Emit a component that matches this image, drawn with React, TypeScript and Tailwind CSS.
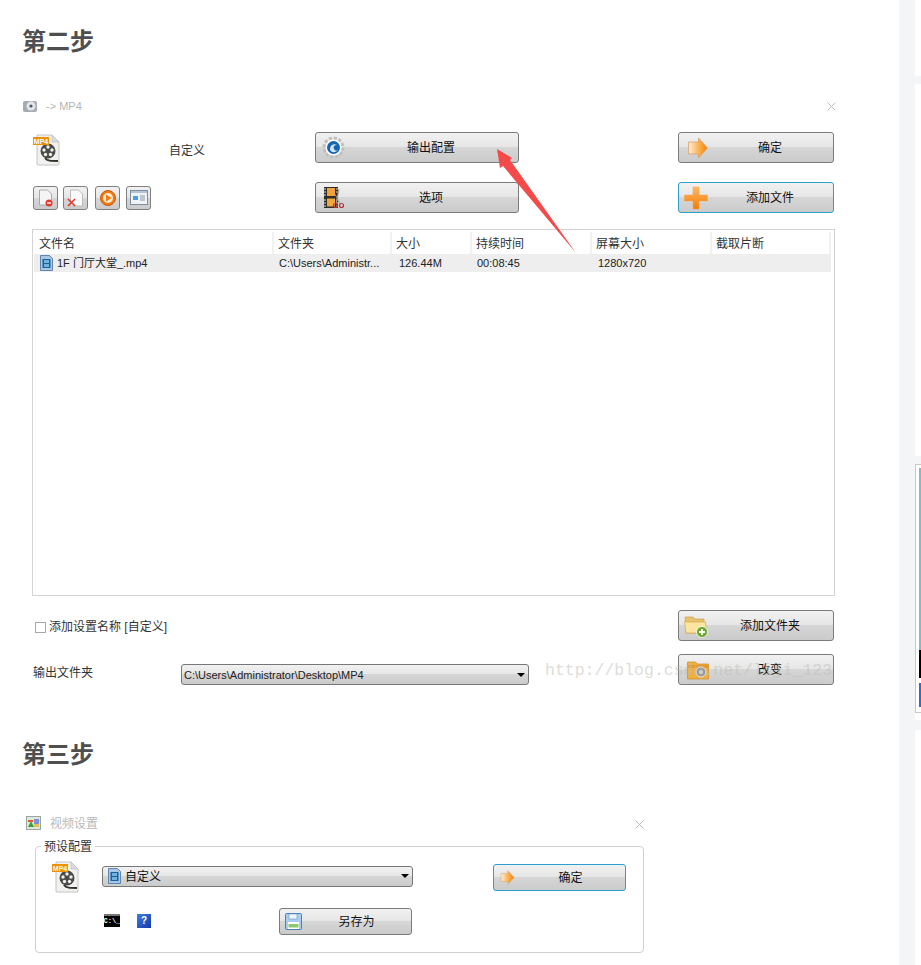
import type { ReactNode } from 'react';

const cjk = 'font-["Liberation_Sans","Noto_Sans_CJK_SC",sans-serif]';
const btnBg = 'bg-[linear-gradient(#f1f1f1_0%,#e6e6e6_49%,#d6d6d6_50%,#cbcbcb_100%)]';

function Mp4Icon() {
    return (
        <svg width="28" height="32" viewBox="0 0 28 32">
            <path d="M4 1h15l7 7v22a1 1 0 0 1-1 1H5a1 1 0 0 1-1-1z" fill="#f1f1ef" stroke="#c4c4c4" />
            <path d="M19 1v7h7z" fill="#dcdcdc" stroke="#bbb" strokeWidth="0.6" />
            <circle cx="15" cy="17" r="7.500" fill="#4a4a46" />
            <circle cx="15" cy="13" r="1.700" fill="#eee" />
            <circle cx="11" cy="16" r="1.700" fill="#eee" />
            <circle cx="19" cy="16" r="1.700" fill="#eee" />
            <circle cx="12.500" cy="20.500" r="1.700" fill="#eee" />
            <circle cx="17.500" cy="20.500" r="1.700" fill="#eee" />
            <path d="M12 24c2 3 6 3 13 3" fill="none" stroke="#33332f" strokeWidth="2" />
            <rect x="0" y="3" width="16" height="8" fill="#ee9100" />
            <text x="8" y="9.600" textAnchor="middle" fontSize="7" fontWeight="700" fill="#fff" fontFamily="Liberation Sans">MP4</text>
        </svg>
    );
}

function GearIcon() {
    return (
        <svg width="23" height="23" viewBox="0 0 23 23">
            <circle cx="11.500" cy="11.500" r="9" fill="none" stroke="#bfbfbf" strokeWidth="4" strokeDasharray="3 1.700" />
            <circle cx="11.500" cy="11.500" r="8" fill="#fff" />
            <circle cx="11.500" cy="11.500" r="6.500" fill="#1464ae" />
            <path d="M8 13c0-4 4-6 7-4-3 0-4 2-3 4s3 2 4 1c-2 3-8 3-8-1z" fill="#cfe6f7" />
        </svg>
    );
}

function FilmCutIcon() {
    return (
        <svg width="22" height="23" viewBox="0 0 22 23">
            <rect x="1" y="1" width="14" height="21" fill="#2c2c28" />
            <rect x="4" y="2" width="8" height="8" fill="#f2a23c" />
            <rect x="4" y="12.500" width="8" height="8" fill="#f4a63e" />
            <path d="M1 3h2M1 6h2M1 9h2M1 14h2M1 17h2M1 20h2M13 3h2M13 6h2M13 14h2M13 17h2M13 20h2" stroke="#ddd" strokeWidth="1" />
            <path d="M16 3l-3 15M12 8l5 10" stroke="#999" strokeWidth="1" />
            <circle cx="12.500" cy="19.500" r="2" fill="none" stroke="#b5303a" strokeWidth="1.200" />
            <circle cx="18.500" cy="19.500" r="2" fill="none" stroke="#b5303a" strokeWidth="1.200" />
        </svg>
    );
}

function ArrowIcon({ id, size }: { id: string; size: number }) {
    return (
        <svg width={size} height={size} viewBox="0 0 21 22">
            <defs>
                <linearGradient id={id} x1="0" x2="1" y1="0" y2="0">
                    <stop offset="0" stopColor="#fdeed8" />
                    <stop offset="0.55" stopColor="#fbb150" />
                    <stop offset="1" stopColor="#fb7d00" />
                </linearGradient>
            </defs>
            <path d="M1 5h10V1l9 10-9 10v-4H1z" fill={`url(#${id})`} stroke="#d9a06a" strokeWidth="0.800" />
        </svg>
    );
}

function PlusIcon() {
    return (
        <svg width="24" height="24" viewBox="0 0 24 24">
            <defs>
                <linearGradient id="plusV" x1="0" x2="0" y1="0" y2="1">
                    <stop offset="0" stopColor="#ffb968" />
                    <stop offset="1" stopColor="#f57c00" />
                </linearGradient>
            </defs>
            <path d="M9 1h6v8h8.500v6H15v8H9v-8H0.500V9H9z" fill="url(#plusV)" stroke="#f2a050" strokeWidth="0.500" strokeLinejoin="round" />
        </svg>
    );
}

function FolderPlusIcon() {
    return (
        <svg width="24" height="24" viewBox="0 0 24 24">
            <path d="M1 3h8l2 2h9v14H2z" fill="#e9c46e" stroke="#c9a24c" strokeWidth="0.700" />
            <path d="M2 19L0.500 8h21l1 11z" fill="#fde4a0" stroke="#d0aa55" strokeWidth="0.700" />
            <circle cx="18" cy="18" r="5.500" fill="#6aa82a" stroke="#fff" strokeWidth="0.800" />
            <path d="M18 15v6M15 18h6" stroke="#fff" strokeWidth="1.800" />
        </svg>
    );
}

function FolderCamIcon() {
    return (
        <svg width="22" height="20" viewBox="0 0 22 20">
            <path d="M0.500 2h8l2 2h11v15h-21z" fill="#efb040" stroke="#c98c28" strokeWidth="0.700" />
            <rect x="0.500" y="5" width="21" height="3" fill="#e89a28" />
            <circle cx="14" cy="12" r="5" fill="#9a9a9a" stroke="#e8e8e8" strokeWidth="1" />
            <circle cx="14" cy="12" r="2" fill="#dcdcdc" />
        </svg>
    );
}

function SaveIcon() {
    return (
        <svg width="17" height="17" viewBox="0 0 17 17">
            <rect x="0.500" y="0.500" width="16" height="16" rx="1" fill="#a9cdf0" stroke="#4a7fb8" />
            <rect x="4" y="1" width="8" height="5" fill="#eef5fb" stroke="#6b97c4" strokeWidth="0.600" />
            <rect x="3" y="9" width="11" height="7" fill="#fff" />
            <rect x="3.500" y="11" width="10" height="3.500" fill="#8dc86a" />
        </svg>
    );
}

function FileFilmIcon() {
    return (
        <svg className="shrink-0" width="13" height="16" viewBox="0 0 13 16">
            <path d="M0.500 0.500h9l3 3v12h-12z" fill="#a9c6e4" stroke="#5d86b0" />
            <rect x="2.500" y="4" width="8" height="9" fill="#1f5f9a" />
            <rect x="4" y="5" width="5" height="3" fill="#6fb4e0" />
            <rect x="4" y="9" width="5" height="3" fill="#6fb4e0" />
        </svg>
    );
}

function CloseX() {
    return (
        <svg width="9" height="9" viewBox="0 0 9 9">
            <path d="M0.500 0.500l8 8M8.500 0.500l-8 8" stroke="#bdbdbd" strokeWidth="1" />
        </svg>
    );
}

function Btn({ icon, iconBox, label, active, className }: { icon: ReactNode; iconBox: string; label: string; active?: boolean; className: string }) {
    return (
        <div className={`flex items-center rounded-[3px] border ${active ? 'border-[#2a9fd0]' : 'border-[#7b7b7b]'} ${btnBg} ${className}`}>
            <div className={`shrink-0 flex items-center [&>svg]:shrink-0 ${iconBox}`}>{icon}</div>
            <span className="flex-1 text-center text-xs text-[#111]">{label}</span>
        </div>
    );
}

function ToolBtn({ children }: { children: ReactNode }) {
    return (
        <div className={`w-[25px] h-[24px] flex items-center justify-center rounded-[3px] border border-[#7f7f7f] ${btnBg}`}>
            {children}
        </div>
    );
}

function Select({ className, children }: { className: string; children: ReactNode }) {
    return (
        <div className={`flex items-center rounded-[3px] border border-[#777] ${btnBg} ${className}`}>
            <div className="flex-1 flex items-center min-w-0">{children}</div>
            <div className="mr-[3px] w-0 h-0 border-x-[4px] border-x-transparent border-t-[4px] border-t-black" />
        </div>
    );
}

function Heading({ children, className }: { children: ReactNode; className: string }) {
    return <h2 className={`ml-[22px] h-[34px] leading-[36px] text-2xl font-bold text-[#4f4f4f] ${className}`}>{children}</h2>;
}

const headers = [
    { label: '文件名', cls: 'w-[240px] pl-[5px]' },
    { label: '文件夹', cls: 'w-[118px] pl-[4px]' },
    { label: '大小', cls: 'w-[80px] pl-[4px]' },
    { label: '持续时间', cls: 'w-[120px] pl-[4px]' },
    { label: '屏幕大小', cls: 'w-[120px] pl-[4px]' },
    { label: '截取片断', cls: 'w-[119px] pl-[4px]' },
];

export default function App() {
    return (
        <div className={`relative flex h-[965px] w-[921px] overflow-hidden bg-white ${cjk}`}>
            <main className="w-[899px] shrink-0 pt-[24px]">
                {/* 第二步 */}
                <Heading className="">第二步</Heading>

                <div className="mt-[40px] ml-[23px] w-[813px] h-[16px] flex items-center text-xs text-[#b5b5b5]">
                    <svg width="14" height="14" viewBox="0 0 14 14">
                        <rect x="0" y="2" width="14" height="11" rx="2" fill="#a4abb2" />
                        <circle cx="8" cy="7" r="4.500" fill="#e4e6e8" />
                        <circle cx="8" cy="7" r="1.600" fill="#4c5a66" />
                    </svg>
                    <span className="ml-[9px] text-[11px]">-&gt; MP4</span>
                    <span className="ml-auto flex"><CloseX /></span>
                </div>

                <div className="ml-[32px] w-[803px]">
                    <div className="mt-[18px] flex h-[31px]">
                        <div className="w-[283px] flex items-start">
                            <div className="ml-[1px] mt-[2px]"><Mp4Icon /></div>
                            <span className="ml-[108px] mt-[11px] text-xs text-[#333]">自定义</span>
                        </div>
                        <Btn className="w-[204px]" iconBox="w-[28px] pl-[6px]" icon={<GearIcon />} label="输出配置" />
                        <Btn className="ml-[159px] w-[156px]" iconBox="w-[28px] pl-[8px]" icon={<ArrowIcon id="a1" size={22} />} label="确定" />
                    </div>

                    <div className="mt-[19px] flex h-[31px]">
                        <div className="w-[283px] flex items-center gap-[5px] pl-[1px]">
                            <ToolBtn>
                                <svg width="17" height="18" viewBox="0 0 17 18">
                                    <path d="M2.500 1h8l4 4v11h-12z" fill="#f5f5f5" stroke="#aaa" />
                                    <circle cx="12" cy="14" r="3.500" fill="#e23b2e" />
                                    <path d="M10 14h4" stroke="#fff" strokeWidth="1.400" />
                                </svg>
                            </ToolBtn>
                            <ToolBtn>
                                <svg width="17" height="18" viewBox="0 0 17 18">
                                    <path d="M3.500 1h8l4 4v12h-12z" fill="#fafafa" stroke="#bbb" />
                                    <path d="M1 10l7 7M8 10l-7 7" stroke="#e0342a" strokeWidth="1.500" />
                                </svg>
                            </ToolBtn>
                            <div className="ml-[2px]">
                                <ToolBtn>
                                    <svg width="18" height="18" viewBox="0 0 18 18">
                                        <circle cx="9" cy="9" r="7.500" fill="#f47a10" stroke="#c8580a" />
                                        <circle cx="9" cy="9" r="5" fill="#fbe9d2" />
                                        <path d="M7 5.500l5.500 3.500-5.500 3.500z" fill="#f47a10" />
                                    </svg>
                                </ToolBtn>
                            </div>
                            <div className="ml-[1px]">
                                <ToolBtn>
                                    <svg width="18" height="15" viewBox="0 0 18 15">
                                        <rect x="0.500" y="0.500" width="17" height="14" fill="#eef3f8" stroke="#7d8ea0" />
                                        <rect x="1" y="1" width="16" height="2" fill="#b4c4d6" />
                                        <rect x="3" y="6" width="5" height="4" fill="#4d9de0" />
                                        <path d="M10 6h5M10 8h5M10 10h5" stroke="#8c99a6" />
                                    </svg>
                                </ToolBtn>
                            </div>
                        </div>
                        <Btn className="w-[204px]" iconBox="w-[28px] pl-[7px]" icon={<FilmCutIcon />} label="选项" />
                        <Btn active className="ml-[159px] w-[156px]" iconBox="w-[28px] pl-[5px]" icon={<PlusIcon />} label="添加文件" />
                    </div>

                    {/* 文件列表 */}
                    <div className="mt-[16px] h-[367px] border border-[#d4d4d4] pt-[2px] pl-[1px] pr-[3px]">
                        <div className="flex h-[22px] text-xs text-[#333]">
                            {headers.map((h) => (
                                <div key={h.label} className={`${h.cls} flex items-center pt-[1px] border-r-2 border-[#f1f1f1]`}>{h.label}</div>
                            ))}
                        </div>
                        <div className="flex h-[18px] items-center bg-[#eeeeee] text-[11px] text-[#222]">
                            <div className="w-[240px] pl-[6px] flex items-center gap-[4px]"><FileFilmIcon /><span>1F 门厅大堂_.mp4</span></div>
                            <div className="w-[118px] pl-[5px]">C:\Users\Administr...</div>
                            <div className="w-[80px] pl-[7px]">126.44M</div>
                            <div className="w-[120px] pl-[5px]">00:08:45</div>
                            <div className="w-[120px] pl-[6px]">1280x720</div>
                        </div>
                    </div>

                    <div className="mt-[14px] flex h-[31px] items-center">
                        <div className="ml-[3px] mt-[3px] w-[11px] h-[11px] border border-[#a8a8a8] bg-white" />
                        <span className="ml-[3px] mt-[3px] text-xs text-[#333]">添加设置名称 [自定义]</span>
                        <Btn className="ml-auto mr-[1px] w-[156px] h-[31px]" iconBox="w-[28px] pl-[5px]" icon={<FolderPlusIcon />} label="添加文件夹" />
                    </div>

                    <div className="mt-[13px] flex h-[31px] items-end">
                        <span className="ml-[1px] w-[148px] mb-[4px] text-xs text-[#333]">输出文件夹</span>
                        <Select className="w-[348px] h-[21px]">
                            <span className="pl-[2px] pt-[1px] text-[11px] text-[#222]">C:\Users\Administrator\Desktop\MP4</span>
                        </Select>
                        <Btn className="ml-auto mr-[1px] w-[156px] h-[31px]" iconBox="w-[28px] pl-[8px]" icon={<FolderCamIcon />} label="改变" />
                    </div>
                </div>

                {/* 第三步 */}
                <Heading className="mt-[52px]">第三步</Heading>

                <div className="mt-[44px] ml-[26px] w-[618px] h-[16px] flex items-center text-xs text-[#b9b9b9]">
                    <svg width="15" height="14" viewBox="0 0 15 14">
                        <rect x="0.500" y="0.500" width="14" height="13" fill="#dfe8e0" stroke="#9aa59c" />
                        <rect x="8" y="3" width="5" height="5" fill="#7f8fd8" />
                        <path d="M2 11l3-6 3 6z" fill="#3f9e3a" />
                        <path d="M2 5h5" stroke="#e25a2a" strokeWidth="2" />
                        <rect x="8" y="8" width="5" height="3" fill="#e0c060" />
                    </svg>
                    <span className="ml-[9px] pt-[2px]">视频设置</span>
                    <span className="ml-auto flex pt-[2px]"><CloseX /></span>
                </div>

                <div className="relative mt-[15px] ml-[35px] w-[609px] h-[107px] rounded-[4px] border border-[#d0d0d0] pt-[14px] pl-[16px]">
                    <span className="absolute left-[5px] -top-[7px] bg-white px-[3px] text-xs leading-[15px] text-[#333]">预设配置</span>
                    <div className="flex h-[32px] items-center">
                        <Mp4Icon />
                        <Select className="ml-[22px] w-[311px] h-[21px] -mt-[2px]">
                            <span className="ml-[5px]"><FileFilmIcon /></span>
                            <span className="ml-[4px] pt-[2px] text-xs text-[#111]">自定义</span>
                        </Select>
                        <Btn active className="ml-[80px] w-[133px] h-[27px] pt-[1px]" iconBox="w-[22px] pl-[6px]" icon={<ArrowIcon id="a2" size={15} />} label="确定" />
                    </div>
                    <div className="mt-[15px] flex h-[27px] items-center">
                        <div className="ml-[52px] -mt-[2px] w-[16px] h-[13px] bg-black border-t-2 border-[#777] flex items-center justify-center font-['Liberation_Mono',monospace] text-[7px] font-bold leading-none text-white">C:\_</div>
                        <div className="ml-[17px] -mt-[2px] w-[14px] h-[14px] bg-[linear-gradient(135deg,#3f7fe0,#1438a8)] flex items-center justify-center text-[10px] font-bold leading-none text-white">?</div>
                        <Btn className="ml-[128px] w-[133px] h-[27px]" iconBox="w-[22px] pl-[5px]" icon={<SaveIcon />} label="另存为" />
                    </div>
                </div>
            </main>

            {/* 右侧边栏 */}
            <div className="w-[16px] shrink-0 bg-[#f4f5f7]" />
            <aside className="w-[6px] shrink-0 flex flex-col bg-white">
                <div className="h-[76px]" />
                <div className="h-[8px] bg-[#f4f5f7]" />
                <div className="h-[372px]" />
                <div className="h-[8px] bg-[#f4f5f7]" />
                <div className="h-[249px] border-y border-l border-[#c8c8c8] pl-[3px] py-[3px] flex flex-col">
                    <div className="h-[182px] bg-[#7fbcc8]" />
                    <div className="h-[28px] bg-black" />
                    <div className="mt-[5px] h-[24px] bg-[#2a6fd0]" />
                </div>
                <div className="h-[7px]" />
                <div className="h-[10px] bg-[#f4f5f7]" />
            </aside>

            {/* 红色箭头标注 */}
            <svg className="absolute left-[490px] top-[140px]" width="95" height="120" viewBox="490 140 95 120">
                <polygon points="497,149 512,158 510,160 576,253 503,166 500,168" fill="#f44a4a" />
            </svg>

            {/* 水印 */}
            <span className="absolute left-[545px] top-[660px] font-['Liberation_Mono',monospace] text-[16.500px] leading-[22px] text-[#bdbdb5] opacity-50 pointer-events-none">http://blog.csdn.net/liji_123</span>
        </div>
    );
}
